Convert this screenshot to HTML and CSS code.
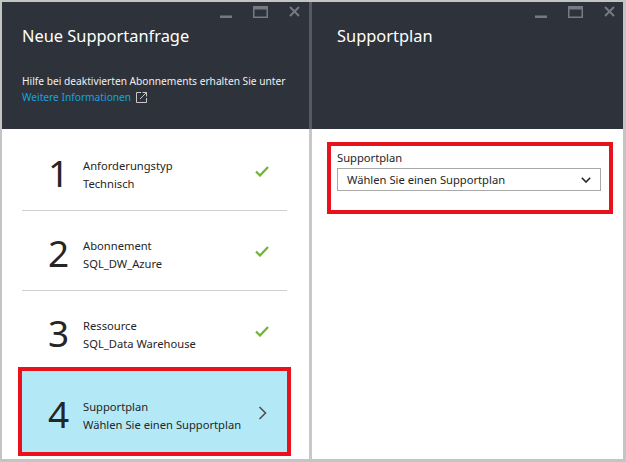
FILE: index.html
```html
<!DOCTYPE html>
<html lang="de">
<head>
<meta charset="utf-8">
<title>Neue Supportanfrage</title>
<link rel="stylesheet" href="styles.css">
</head>
<body>
<div class="frame">
  <section class="blade blade-left">
    <header class="head">
      <div class="controls">
        <svg class="ic" width="12" height="12" viewBox="0 0 12 12"><rect x="0" y="10" width="12" height="2"/></svg>
        <svg class="ic" width="15" height="12" viewBox="0 0 15 12"><path d="M0.75 0.75h13.5v10.5H0.75z" fill="none" stroke-width="1.5"/><rect x="0" y="0" width="15" height="3"/></svg>
        <svg class="ic" width="11" height="11" viewBox="0 0 11 11"><path d="M1 1L10 10M10 1L1 10" fill="none" stroke-width="2"/></svg>
      </div>
      <h1 class="title">Neue Supportanfrage</h1>
      <p class="note">Hilfe bei deaktivierten Abonnements erhalten Sie unter<br><a class="link" href="#">Weitere Informationen</a><svg class="ext" width="11" height="11" viewBox="0 0 11 11"><path d="M5 0.5H0.5v10h10V6" fill="none" stroke-width="1"/><path d="M4 7L10.5 0.5M6.5 0.5h4v4" fill="none" stroke-width="1"/></svg></p>
    </header>
    <ol class="steps">
      <li class="step">
        <span class="num">1</span>
        <div class="txt"><span>Anforderungstyp</span><span>Technisch</span></div>
        <svg class="check" width="14" height="11" viewBox="0 0 14 11"><path d="M1 5.5L5 9.5L13 1" fill="none" stroke-width="2.2"/></svg>
      </li>
      <li class="step">
        <span class="num">2</span>
        <div class="txt"><span>Abonnement</span><span>SQL_DW_Azure</span></div>
        <svg class="check" width="14" height="11" viewBox="0 0 14 11"><path d="M1 5.5L5 9.5L13 1" fill="none" stroke-width="2.2"/></svg>
      </li>
      <li class="step">
        <span class="num">3</span>
        <div class="txt"><span>Ressource</span><span>SQL_Data Warehouse</span></div>
        <svg class="check" width="14" height="11" viewBox="0 0 14 11"><path d="M1 5.5L5 9.5L13 1" fill="none" stroke-width="2.2"/></svg>
      </li>
      <li class="step step-active">
        <span class="num">4</span>
        <div class="txt"><span>Supportplan</span><span>Wählen Sie einen Supportplan</span></div>
        <svg class="chev" width="9" height="14" viewBox="0 0 9 14"><path d="M1.5 1L7.5 7L1.5 13" fill="none" stroke-width="1.6"/></svg>
      </li>
    </ol>
  </section>
  <div class="divider"></div>
  <section class="blade blade-right">
    <header class="head">
      <div class="controls">
        <svg class="ic" width="12" height="12" viewBox="0 0 12 12"><rect x="0" y="10" width="12" height="2"/></svg>
        <svg class="ic" width="15" height="12" viewBox="0 0 15 12"><path d="M0.75 0.75h13.5v10.5H0.75z" fill="none" stroke-width="1.5"/><rect x="0" y="0" width="15" height="3"/></svg>
        <svg class="ic" width="11" height="11" viewBox="0 0 11 11"><path d="M1 1L10 10M10 1L1 10" fill="none" stroke-width="2"/></svg>
      </div>
      <h1 class="title title-right">Supportplan</h1>
    </header>
    <div class="form-box">
      <label class="field-label" for="plan">Supportplan</label>
      <div class="select" id="plan">
        <span>Wählen Sie einen Supportplan</span>
        <svg class="down" width="10" height="6" viewBox="0 0 10 6"><path d="M0.8 0.8L5 5L9.2 0.8" fill="none" stroke-width="1.6"/></svg>
      </div>
    </div>
  </section>
</div>
</body>
</html>
```
FILE: styles.css
```css
* { box-sizing: border-box; }
html, body { margin: 0; padding: 0; }
body {
  font-family: "Noto Sans", "Open Sans", sans-serif;
  color: #252525;
  background: #c4c4c4;
}
.frame {
  width: 626px;
  height: 462px;
  display: flex;
  border-style: solid;
  border-color: #c4c4c4;
  border-width: 2px 3px 3px 2px;
  background: #fff;
}
.blade {
  display: flex;
  flex-direction: column;
  background: #fff;
}
.blade-left { width: 307px; }
.blade-right { flex: 1; }
.divider {
  width: 3px;
  background: linear-gradient(#565a60 0, #565a60 127px, #c8c8c8 127px);
}
.head {
  height: 127px;
  background: #2e323a;
  color: #fff;
  padding: 0 0 0 20px;
}
.controls {
  display: flex;
  justify-content: flex-end;
  align-items: flex-start;
  gap: 21px;
  padding: 4px 9px 0 0;
  height: 16px;
}
.blade-right .controls { padding-right: 8px; }
.ic { fill: #777a80; stroke: #777a80; }
.title {
  margin: 8px 0 0;
  font-size: 16.4px;
  line-height: 20px;
  font-weight: 400;
}
.title-right { padding-left: 5px; }
.note {
  margin: 28px 0 0;
  font-size: 10.2px;
  line-height: 15.7px;
  color: #f0f0f0;
  white-space: nowrap;
}
.link { color: #14a4e0; text-decoration: none; }
.ext { stroke: #c8c8c8; margin-left: 5px; vertical-align: -2px; }
.steps {
  list-style: none;
  margin: 0;
  padding: 2px 22px 0 20px;
}
.step {
  display: flex;
  align-items: center;
  height: 80px;
  border-bottom: 1px solid #d0d0d0;
  padding: 0 18px 0 27px;
}
.num {
  width: 34px;
  font-size: 37px;
  line-height: 36px;
  font-weight: 400;
  color: #252525;
  padding-top: 4px;
  margin-left: -1px;
  margin-right: 1px;
}
.txt {
  flex: 1;
  display: flex;
  flex-direction: column;
  font-size: 11.2px;
  line-height: 18px;
  padding-top: 9px;
}
.check { stroke: #6cb52d; margin-top: 2px; }
.step-active {
  height: 81px;
  border-bottom: 0;
  background: #b3e9f7;
  outline: 4px solid #e8121c;
  padding-right: 20px;
}
.chev { stroke: #505050; margin-top: 2px; }
.form-box {
  margin: 13px 10px 0 15px;
  border: 4px solid #e8121c;
  padding: 4px 8px 19px 6px;
}
.field-label {
  display: block;
  font-size: 11.2px;
  line-height: 16px;
}
.select {
  margin-top: 2px;
  height: 23px;
  border: 1px solid #a9a9a9;
  display: flex;
  align-items: center;
  justify-content: space-between;
  padding: 0 9px 0 9px;
  font-size: 11.2px;
}
.down { stroke: #252525; }
```
